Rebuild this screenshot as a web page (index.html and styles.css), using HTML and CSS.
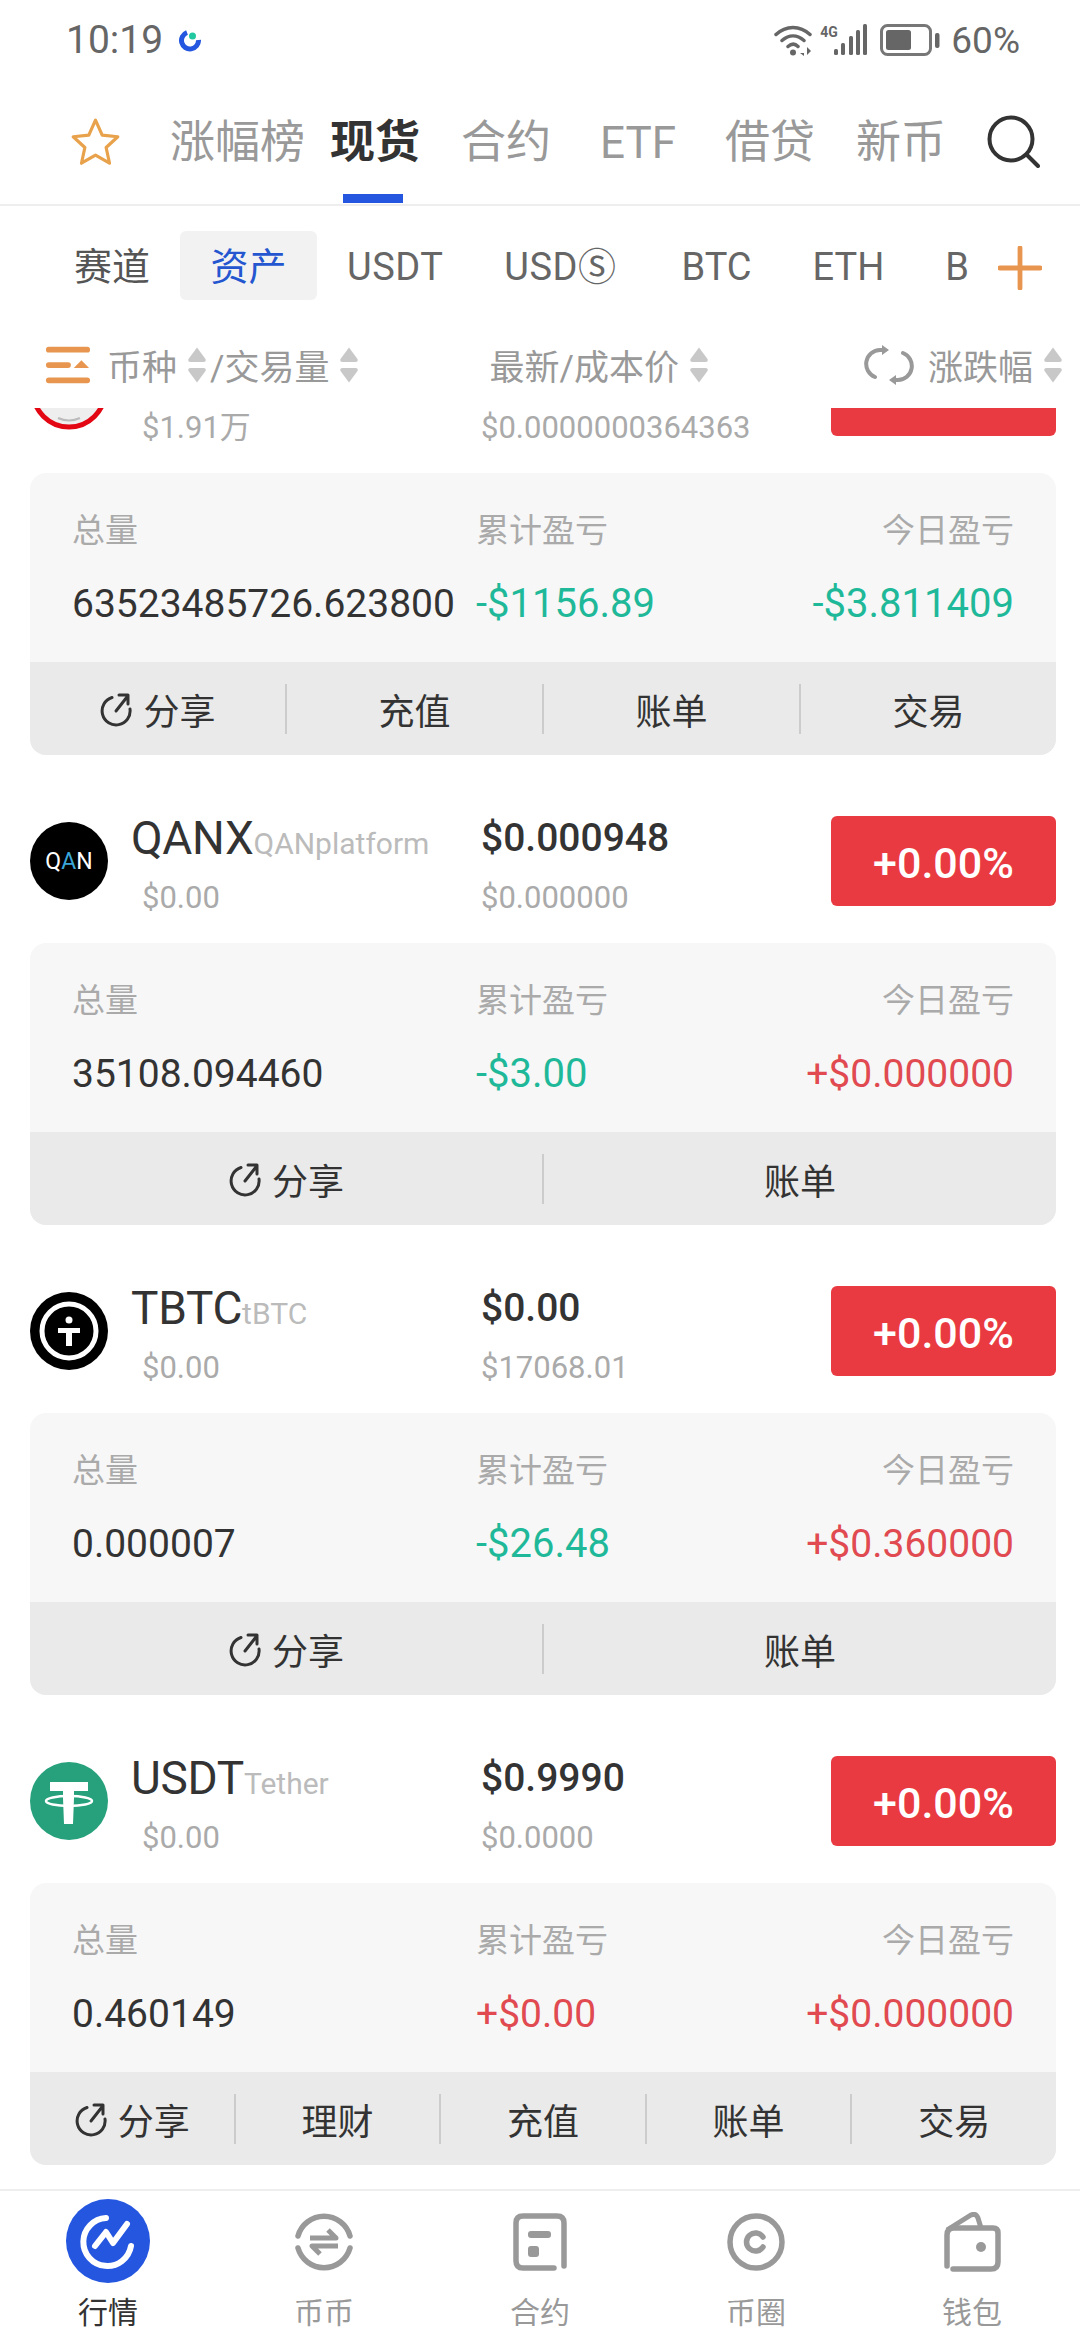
FILE: index.html
```html
<!DOCTYPE html>
<html lang="zh-CN">
<head>
<meta charset="utf-8">
<title>现货</title>
<link rel="stylesheet" href="styles.css">
</head>
<body>
<svg class="defs" width="0" height="0" aria-hidden="true">
  <symbol id="sort" viewBox="0 0 20 38">
    <path d="M10 1.500 18.500 13q1 3-2 3H3.500q-3 0-2-3Z" fill="#c8c8c8"/>
    <path d="M10 36.500 18.500 25q1-3-2-3H3.500q-3 0-2 3Z" fill="#c8c8c8"/>
  </symbol>
  <symbol id="share" viewBox="0 0 34 36">
    <path d="M13 6.500A14 14 0 1 0 31 18" fill="none" stroke="#333" stroke-width="3" stroke-linecap="round"/>
    <path d="M17 20 28 6M20 4h9v9" fill="none" stroke="#333" stroke-width="3" stroke-linecap="round" stroke-linejoin="round"/>
  </symbol>
</svg>
<div class="page">
  <header class="status">
    <div class="status-left">
      <span>10:19</span>
      <svg class="app-dot" viewBox="0 0 22 24"><path d="M8 4.500A8.500 8.500 0 1 0 19.500 12" fill="none" stroke="#2456e0" stroke-width="5"/><circle cx="13.500" cy="8" r="3.500" fill="#22c9a0"/></svg>
    </div>
    <div class="status-right">
      <svg class="st-wifi" viewBox="0 0 40 32"><path d="M2 10.500C12 1 26 1 36 10.500M8 16.500c7-6 15-6 22 0M14 22.500c3.500-3 7-3 10 0" fill="none" stroke="#666" stroke-width="3.500" stroke-linecap="round"/><circle cx="19" cy="28.500" r="3" fill="#666"/><path d="M30 24v8l-4-3h4ZM33 23v8l4-4Z" fill="#666"/></svg>
      <span class="st-4g">4G</span>
      <svg class="st-bars" viewBox="0 0 34 32"><g fill="#666"><rect x="0" y="25" width="4" height="6" rx="1.500"/><rect x="7" y="19" width="4" height="12" rx="1.500"/><rect x="15" y="12" width="4" height="19" rx="1.500"/><rect x="22" y="6" width="4" height="25" rx="1.500"/><rect x="29" y="0" width="4" height="31" rx="1.500"/></g></svg>
      <svg class="st-batt" viewBox="0 0 60 32"><rect x="1.500" y="1.500" width="49" height="29" rx="6" fill="none" stroke="#777" stroke-width="3"/><rect x="6" y="6" width="25" height="20" rx="2.500" fill="#666"/><rect x="55" y="9" width="4.500" height="15" rx="2" fill="#666"/></svg>
      <span class="st-pct">60%</span>
    </div>
  </header>

  <nav class="tabs">
    <svg class="star" viewBox="0 0 48 48"><path d="M24 3l6.300 14 14.700 1.600-11 10.100 3.200 14.800L24 35.800l-13.200 7.700L14 28.700 3 18.600 17.700 17Z" fill="none" stroke="#e9a24c" stroke-width="3" stroke-linejoin="round"/></svg>
    <span class="tab tab-first">涨幅榜</span>
    <span class="tab tab-active">现货</span>
    <span class="tab">合约</span>
    <span class="tab tab-etf">ETF</span>
    <span class="tab">借贷</span>
    <span class="tab tab-last">新币</span>
    <svg class="search" viewBox="0 0 54 54"><circle cx="25" cy="25" r="21.500" fill="none" stroke="#333" stroke-width="4"/><path d="M41 41 52 52" stroke="#333" stroke-width="4" stroke-linecap="round"/></svg>
  </nav>

  <div class="chips">
    <span class="chip chip-plain">赛道</span>
    <span class="chip chip-active">资产</span>
    <span class="chip c-usdt">USDT</span>
    <span class="chip c-usds">USDⓈ</span>
    <span class="chip c-btc">BTC</span>
    <span class="chip c-eth">ETH</span>
    <span class="chip c-b">B</span>
    <svg class="plus" viewBox="0 0 46 46"><path d="M23 2v42M2 23h42" stroke="#e8964f" stroke-width="5" stroke-linecap="round"/></svg>
  </div>

  <div class="heads">
    <svg class="filter" viewBox="0 0 48 40"><g fill="#e8964f"><rect x="1" y="1" width="46" height="6" rx="3"/><rect x="1" y="17" width="26" height="6" rx="3"/><path d="M38 15l8 8H30Z"/><rect x="1" y="33" width="46" height="6" rx="3"/></g></svg>
    <span class="head">币种</span>
    <svg class="sort"><use href="#sort"/></svg>
    <span class="head">/交易量</span>
    <svg class="sort"><use href="#sort"/></svg>
    <span class="head h-price">最新/成本价</span>
    <svg class="sort"><use href="#sort"/></svg>
    <svg class="cycle" viewBox="0 0 50 40"><path d="M20 5H16A14 14 0 0 0 11 32M30 35h4A14 14 0 0 0 39 8" fill="none" stroke="#999" stroke-width="4" stroke-linecap="round"/><path d="M18 0l7 5-7 5ZM32 30l-7 5 7 5Z" fill="#999"/></svg>
    <span class="head">涨跌幅</span>
    <svg class="sort"><use href="#sort"/></svg>
  </div>

  <main class="list">
    <div class="scroller">

      <article class="item">
        <div class="row">
          <svg class="logo" viewBox="0 0 78 78"><circle cx="39" cy="39" r="36" fill="#eee" stroke="#e30613" stroke-width="5"/><path d="M28 66q11 5 22 0" fill="none" stroke="#bbb" stroke-width="2"/></svg>
          <div class="info"><div class="name-line"><span class="name">&nbsp;</span></div><div class="sub sub-info">$1.91万</div></div>
          <div class="price-col"><div class="price">&nbsp;</div><div class="sub">$0.0000000364363</div></div>
          <div class="badge">+0.14%</div>
        </div>
        <div class="card">
          <div class="stats">
            <div class="label">总量</div><div class="label">累计盈亏</div><div class="label right">今日盈亏</div>
            <div class="value">63523485726.623800</div><div class="value green">-$1156.89</div><div class="value green right">-$3.811409</div>
          </div>
          <div class="actions">
            <span class="act"><svg class="share"><use href="#share"/></svg>分享</span>
            <span class="act">充值</span><span class="act">账单</span><span class="act">交易</span>
          </div>
        </div>
      </article>

      <article class="item">
        <div class="row">
          <div class="logo logo-qan"><span>Q<b>A</b>N</span></div>
          <div class="info"><div class="name-line"><span class="name">QANX</span><span class="fullname">QANplatform</span></div><div class="sub sub-info">$0.00</div></div>
          <div class="price-col"><div class="price">$0.000948</div><div class="sub">$0.000000</div></div>
          <div class="badge">+0.00%</div>
        </div>
        <div class="card">
          <div class="stats">
            <div class="label">总量</div><div class="label">累计盈亏</div><div class="label right">今日盈亏</div>
            <div class="value">35108.094460</div><div class="value green">-$3.00</div><div class="value red right">+$0.000000</div>
          </div>
          <div class="actions">
            <span class="act"><svg class="share"><use href="#share"/></svg>分享</span>
            <span class="act">账单</span>
          </div>
        </div>
      </article>

      <article class="item">
        <div class="row">
          <svg class="logo" viewBox="0 0 78 78"><circle cx="39" cy="39" r="39" fill="#000"/><circle cx="39" cy="39" r="27" fill="#000" stroke="#fff" stroke-width="5"/><circle cx="39" cy="28" r="3.500" fill="#fff"/><path d="M28 36h22v5h-8v13h-6V41h-8Z" fill="#fff"/></svg>
          <div class="info"><div class="name-line"><span class="name">TBTC</span><span class="fullname">tBTC</span></div><div class="sub sub-info">$0.00</div></div>
          <div class="price-col"><div class="price">$0.00</div><div class="sub">$17068.01</div></div>
          <div class="badge">+0.00%</div>
        </div>
        <div class="card">
          <div class="stats">
            <div class="label">总量</div><div class="label">累计盈亏</div><div class="label right">今日盈亏</div>
            <div class="value">0.000007</div><div class="value green">-$26.48</div><div class="value red right">+$0.360000</div>
          </div>
          <div class="actions">
            <span class="act"><svg class="share"><use href="#share"/></svg>分享</span>
            <span class="act">账单</span>
          </div>
        </div>
      </article>

      <article class="item">
        <div class="row">
          <svg class="logo" viewBox="0 0 78 78"><circle cx="39" cy="39" r="39" fill="#26a17b"/><path d="M20 20h38v9H44v7l-1 26H34L33 36v-7H20Z" fill="#fff"/><ellipse cx="39" cy="39" rx="23" ry="5" fill="none" stroke="#fff" stroke-width="2.500"/></svg>
          <div class="info"><div class="name-line"><span class="name">USDT</span><span class="fullname">Tether</span></div><div class="sub sub-info">$0.00</div></div>
          <div class="price-col"><div class="price">$0.9990</div><div class="sub">$0.0000</div></div>
          <div class="badge">+0.00%</div>
        </div>
        <div class="card">
          <div class="stats">
            <div class="label">总量</div><div class="label">累计盈亏</div><div class="label right">今日盈亏</div>
            <div class="value">0.460149</div><div class="value red">+$0.00</div><div class="value red right">+$0.000000</div>
          </div>
          <div class="actions">
            <span class="act"><svg class="share"><use href="#share"/></svg>分享</span>
            <span class="act">理财</span><span class="act">充值</span><span class="act">账单</span><span class="act">交易</span>
          </div>
        </div>
      </article>

    </div>
  </main>

  <footer class="bottom">
    <div class="nav-item nav-active">
      <svg class="nav-main" viewBox="0 0 84 84"><circle cx="42" cy="42" r="42" fill="#2456e0"/><path d="M40 19A24 24 0 1 0 65 47" fill="none" stroke="#fff" stroke-width="6" stroke-linecap="round"/><path d="M29 47l11-14 7 11 14-19" fill="none" stroke="#fff" stroke-width="6" stroke-linecap="round" stroke-linejoin="round"/></svg>
      <span>行情</span>
    </div>
    <div class="nav-item">
      <svg class="nav-ico" viewBox="0 0 58 60"><path d="M3 24A27 27 0 0 1 55 24M55 36A27 27 0 0 1 3 36" fill="none" stroke="#999" stroke-width="5.500" stroke-linecap="round"/><path d="M15 26h26l-8-8M43 34H17l8 8" fill="none" stroke="#999" stroke-width="5" stroke-linejoin="round"/></svg>
      <span>币币</span>
    </div>
    <div class="nav-item">
      <svg class="nav-ico" viewBox="0 0 58 60"><path d="M53 54V11q0-7-7-7H12q-7 0-7 7v38q0 7 7 7h31" fill="none" stroke="#999" stroke-width="5.500" stroke-linecap="round"/><rect x="17" y="19" width="23" height="7" rx="3" fill="#999"/><rect x="17" y="34" width="11" height="11" rx="3" fill="#999"/></svg>
      <span>合约</span>
    </div>
    <div class="nav-item">
      <svg class="nav-ico" viewBox="0 0 58 60"><circle cx="29" cy="30" r="26" fill="none" stroke="#999" stroke-width="5.500"/><path d="M36 25a9 9 0 1 0 0 10" fill="none" stroke="#999" stroke-width="5.500" stroke-linecap="round"/></svg>
      <span>币圈</span>
    </div>
    <div class="nav-item">
      <svg class="nav-ico" viewBox="0 0 58 60"><path d="M4 18 28 3q5-2 7 3l3 10" fill="none" stroke="#999" stroke-width="5"/><path d="M10 57H48q7 0 7-7V21q0-5-5-5H11q-7 0-7 7v31" fill="none" stroke="#999" stroke-width="5.500" stroke-linecap="round"/><circle cx="38" cy="35" r="5" fill="#999"/></svg>
      <span>钱包</span>
    </div>
  </footer>
</div>
</body>
</html>
```
FILE: styles.css
```css
* { box-sizing: border-box; }
html, body { margin: 0; padding: 0; background: #fff; }
body { font-family: Roboto, "Noto Sans CJK SC", sans-serif; color: #333; }
.defs { position: absolute; }
.page { width: 1080px; height: 2340px; display: flex; flex-direction: column; overflow: hidden; }

.status { height: 80px; flex: none; display: flex; justify-content: space-between; align-items: center; padding: 0 60px 0 66px; color: #666; }
.status-left { display: flex; align-items: center; gap: 16px; font-size: 39px; }
.app-dot { width: 22px; height: 24px; }
.status-right { display: flex; align-items: center; }
.st-wifi { width: 40px; height: 32px; }
.st-4g { font-size: 14px; font-weight: 700; width: 22px; margin: -16px 0 0 6px; }
.st-bars { width: 34px; height: 32px; margin-left: -8px; }
.st-batt { width: 60px; height: 32px; margin-left: 12px; }
.st-pct { font-size: 37px; margin-left: 11px; }

.tabs { height: 126px; flex: none; display: flex; align-items: center; padding: 2px 0 0 70px; border-bottom: 2px solid #eee; position: relative; }
.star { width: 51px; height: 51px; margin: -2px 49px 0 0; }
.tab { font-size: 45px; color: #999; margin-right: 41px; line-height: 60px; }
.tab-first { margin-right: 25px; }
.tab-active { color: #333; font-weight: 700; position: relative; }
.tab-active::after { content: ""; position: absolute; left: 13px; right: 17px; top: 81px; height: 9px; background: #2456e0; }
.tab-etf { font-size: 44px; margin: 0 49px 0 8px; }
.tab-last { margin-right: 40px; }
.search { width: 54px; height: 54px; margin-top: -4px; }

.chips { height: 124px; flex: none; display: flex; align-items: center; padding: 0 0 6px 74px; font-size: 38px; color: #666; }
.chip { line-height: 50px; padding-top: 3px; }
.chip-plain { color: #555; margin-right: 30px; }
.chip-active { width: 137px; height: 69px; display: flex; align-items: center; justify-content: center; background: #f2f2f2; border-radius: 6px; color: #2456d0; margin-right: 30px; }
.c-usdt { margin-right: 61px; letter-spacing: 0.5px; }
.c-usds { margin-right: 65px; letter-spacing: 0.5px; }
.c-btc { margin-right: 61px; }
.c-eth { margin-right: 61px; }
.c-b { width: 53px; }
.plus { width: 44px; height: 44px; margin-top: 6px; }

.heads { height: 78px; flex: none; display: flex; align-items: center; padding: 0 0 9px 45px; font-size: 35px; color: #999; }
.filter { width: 46px; height: 40px; margin-right: 16px; }
.head { white-space: nowrap; }
.sort { width: 20px; height: 38px; margin: 0 3px 0 10px; }
.h-price { margin-left: 127px; }
.cycle { width: 50px; height: 40px; margin: 0 14px 0 152px; }

.list { flex: 1; overflow: hidden; min-height: 0; }
.scroller { margin-top: -123px; }

.row { height: 188px; display: grid; grid-template-columns: 101px 350px 350px 225px; padding: 0 0 0 30px; align-items: start; }
.logo { width: 78px; height: 78px; margin-top: 67px; }
.logo-qan { border-radius: 50%; background: #000; color: #fff; display: flex; align-items: center; justify-content: center; font-size: 23px; }
.logo-qan b { color: #3aa5d8; font-weight: 400; }
.info, .price-col { padding-top: 53px; }
.name-line { display: flex; align-items: baseline; height: 60px; line-height: 60px; white-space: nowrap; }
.name { font-size: 46px; color: #333; letter-spacing: -0.3px; }
.fullname { font-size: 30px; color: #bbb; }
.price { height: 60px; line-height: 60px; font-size: 39px; font-weight: 500; color: #333; }
.sub { font-size: 31px; line-height: 60px; color: #aaa; white-space: nowrap; }
.sub-info { padding-left: 11px; }
.badge { margin-top: 61px; height: 90px; padding-top: 3px; background: #ea3a41; border-radius: 6px; color: #fff; font-size: 43px; font-weight: 500; display: flex; align-items: center; justify-content: center; }

.card { margin: 0 24px 0 30px; background: #f7f7f7; border-radius: 16px; overflow: hidden; }
.stats { height: 189px; display: grid; grid-template-columns: 404px 1fr 1fr; grid-template-rows: 52px 52px; row-gap: 21px; padding: 32px 42px 0 42px; }
.label { font-size: 33px; line-height: 52px; color: #aaa; }
.value { font-size: 39px; line-height: 52px; color: #333; white-space: nowrap; }
.green { color: #1fb99a; font-size: 40px; }
.red { color: #e04a50; font-size: 39px; }
.right { text-align: right; }

.actions { height: 93px; background: #eaeaea; display: flex; align-items: center; }
.act { flex: 1; height: 50px; display: flex; align-items: center; justify-content: center; gap: 10px; font-size: 36px; color: #333; border-left: 2px solid #ccc; }
.act:first-child { border-left: 0; }
.share { width: 34px; height: 36px; }

.bottom { height: 151px; flex: none; border-top: 2px solid #eee; display: grid; grid-template-columns: repeat(5, 216px); background: #fff; }
.nav-item { display: flex; flex-direction: column; align-items: center; font-size: 30px; color: #999; position: relative; }
.nav-item span { line-height: 40px; position: absolute; top: 102px; }
.nav-active { color: #333; }
.nav-main { width: 84px; height: 84px; margin-top: 8px; }
.nav-ico { width: 58px; height: 60px; margin-top: 21px; }
```
